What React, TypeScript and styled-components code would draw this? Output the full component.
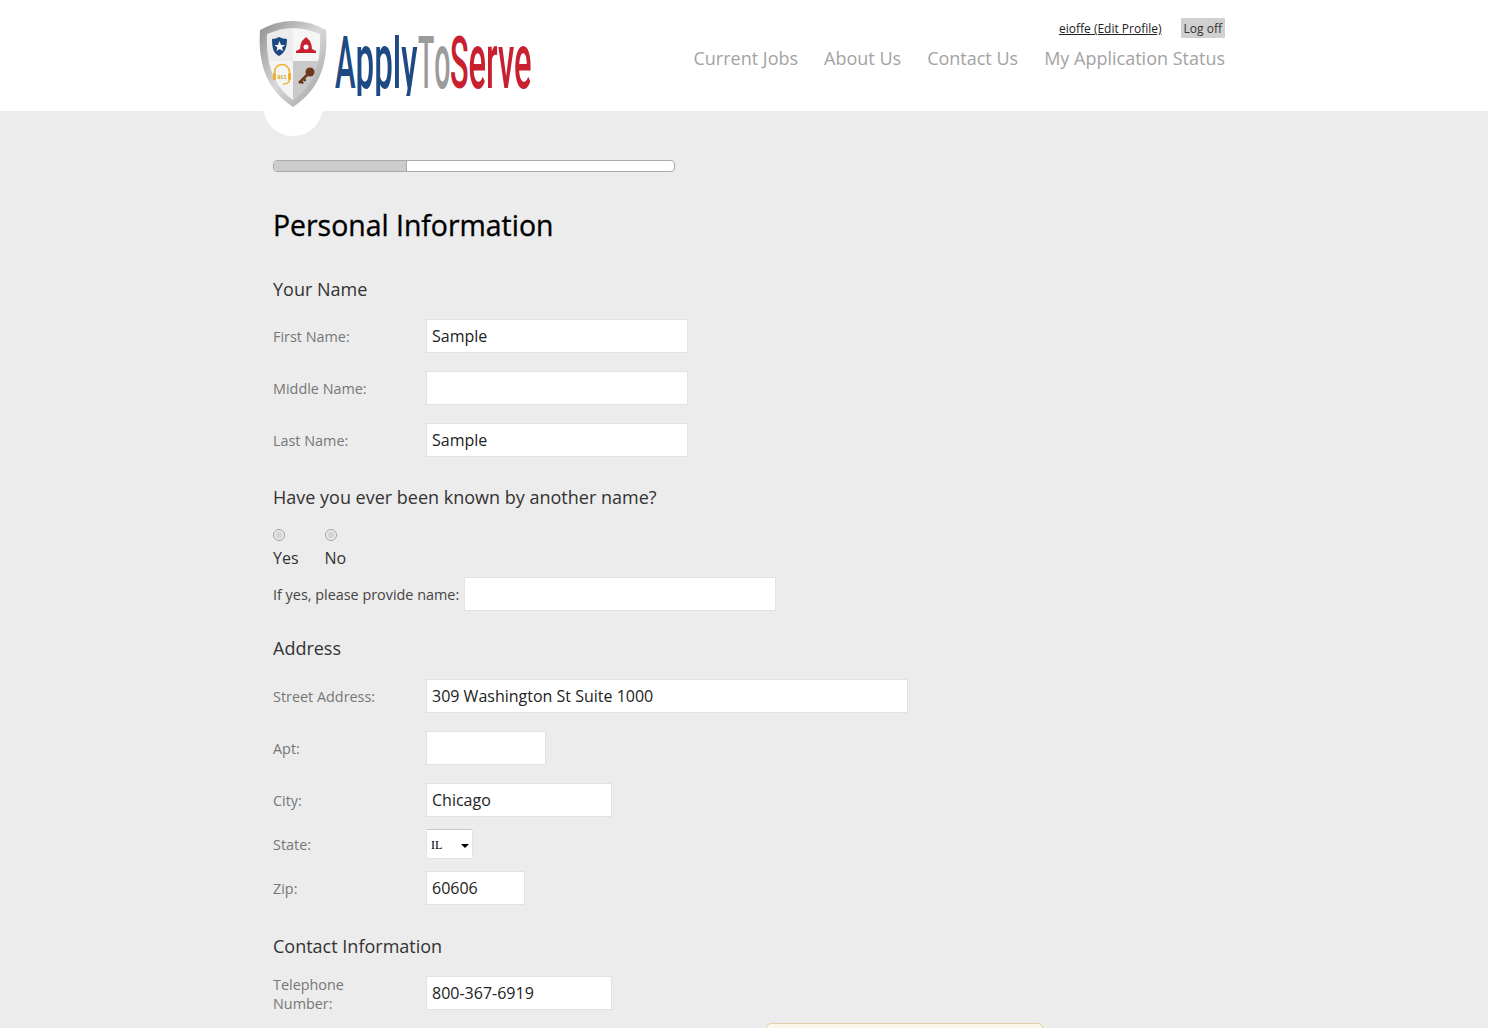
import React from "react";
import styled, { createGlobalStyle } from "styled-components";

const Global = createGlobalStyle`
  html, body { margin: 0; padding: 0; height: 1028px; overflow: hidden; background: #ececec; }
  body { font-family: "Open Sans", "Liberation Sans", sans-serif; color: #333; }
`;
const Header = styled.header`
  position: relative; height: 111px; background: #fff;
`;
const HeaderInner = styled.div`
  position: relative; width: 960px; height: 111px; margin: 0 auto; display: flex; justify-content: space-between;
`;
const LogoBump = styled.div`
  position: absolute; left: -1px; top: 76px; width: 60px; height: 60px; border-radius: 50%; background: #fff;
`;
const LogoArt = styled.svg`
  position: relative; display: block; margin: 20px 0 0 -5px; width: 274px; height: 88px;
`;
const HeaderRight = styled.div`
  display: flex; flex-direction: column; align-items: flex-end; padding-top: 18px; margin-right: -1px;
`;
const Utility = styled.div`
  display: flex; align-items: flex-start; gap: 19px; height: 20px; font-size: 12px; line-height: 22px;
`;
const ProfileLink = styled.a`
  color: #222; text-decoration: underline;
`;
const LogOff = styled.a`
  background: #d0d0d0; color: #333; padding: 0 3px; height: 20px;
`;
const Nav = styled.nav`
  display: flex; gap: 26px; margin-top: 7px; font-size: 18px; line-height: 26px; color: #a3a3a3;
`;
const Main = styled.main`
  width: 960px; margin: 0 auto; padding: 49px 0 0 9px; box-sizing: border-box;
`;
const Progress = styled.div`
  width: 402px; height: 12px; box-sizing: border-box; background: #fff; border: 1px solid #aaa; border-radius: 4px; overflow: hidden; margin-bottom: 34px;
`;
const ProgressFill = styled.div`
  height: 100%; background: #ccc; border-right: 1px solid #aaa;
`;
const Title = styled.h1`
  margin: 0 0 32px; font-size: 28.4px; line-height: 38px; font-weight: 400; color: #000; -webkit-text-stroke: .35px #000;
`;
const Section = styled.h2<{ $mb: number }>`
  margin: 0 0 ${p => p.$mb}px; font-size: 18px; line-height: 26px; font-weight: 400; color: #333;
`;
const Row = styled.div<{ $mb?: number }>`
  display: flex; align-items: center; margin-bottom: ${p => p.$mb ?? 18}px;
`;
const Label = styled.label`
  width: 153px; flex: none; font-size: 14.4px; line-height: 19px; color: #777;
`;
const TwoLineLabel = styled(Label)`
  padding-top: 2px;
`;
const TextInput = styled.input<{ $w: number }>`
  width: ${p => p.$w}px; height: 34px; box-sizing: border-box; padding: 0 5px; background: #fff;
  border: 1px solid #e2e2e2; font: 16px "Open Sans", sans-serif; color: #222; outline: none;
`;
const RadioGroup = styled.div`
  display: flex; gap: 26px; margin-bottom: 8px;
`;
const RadioOption = styled.label`
  display: flex; flex-direction: column; align-items: flex-start; gap: 6px; font-size: 16px; line-height: 22px; color: #333;
`;
const Radio = styled.input`
  appearance: none; margin: 0; width: 12px; height: 12px; border: 1px solid #a0a0a0; border-radius: 50%; box-sizing: border-box;
  background: radial-gradient(circle at 50% 50%, #d4d4d4 0 35%, #f4f4f4 70%);
`;
const InlineLabel = styled.label`
  font-size: 14.4px; line-height: 19px; color: #444; margin-right: 5px;
`;
const SelectWrap = styled.div`
  position: relative; width: 47px; height: 30px;
  &::after {
    content: ""; position: absolute; right: 4px; top: 15px; border: 4px solid transparent; border-top-color: #000; border-bottom: 0;
  }
`;
const StateSelect = styled.select`
  appearance: none; width: 47px; height: 30px; box-sizing: border-box; padding: 2px 0 0 4px; background: #fff;
  border: 1px solid #e2e2e2; border-top-color: #c8c8c8; border-radius: 2px; font: 12px "Liberation Serif", serif; color: #000; outline: none;
`;
const HelpPanel = styled.div`
  position: fixed; left: 766px; top: 1023px; width: 277px; height: 40px; box-sizing: border-box;
  background: #fdf6e6; border: 1px solid #e6cfa6; border-radius: 5px;
`;

const Logo = () => (
  <LogoArt viewBox="259 20 274 88">
    <defs>
      <linearGradient id="rim" x1="0" y1="0" x2="1" y2="1">
        <stop offset="0" stopColor="#8f8f8f" /><stop offset=".5" stopColor="#d8d8d8" /><stop offset="1" stopColor="#9a9a9a" />
      </linearGradient>
      <clipPath id="inner">
        <path d="M267 34 Q281 28 293 28 Q306 28 320 34 C321 60 316 84 293 100 C271 84 266 60 267 34Z" />
      </clipPath>
      <clipPath id="wordmark">
        <rect x="330" y="35" width="205" height="61" />
      </clipPath>
    </defs>
    <path d="M260 30 Q276 21 293 21 Q310 21 326 30 C328 60 322 88 293 107 C264 88 258 60 260 30Z" fill="url(#rim)" />
    <g clipPath="url(#inner)">
      <rect x="260" y="24" width="33" height="37" fill="#ececec" />
      <rect x="293" y="24" width="34" height="37" fill="#f6f6f6" />
      <rect x="260" y="61" width="33" height="42" fill="#f4f4f4" />
      <rect x="293" y="61" width="34" height="42" fill="#c9c9c9" />
    </g>
    <path d="M272 39 Q276 39 279 37 Q283 39 287 39 C287 47 285 53 279 56 C273 53 272 47 272 39Z" fill="#1d4a83" />
    <path d="M279.500 41 L281 45 L285 45 L282 47.500 L283 51 L279.500 49 L276.500 51 L277.500 47.500 L274.500 45 L278 45Z" fill="#fff" />
    <path d="M306 37 L310 41 Q312 45 312 49 L316 51 V53 H296 V51 L300 49 Q300 45 302 41Z" fill="#c8202f" />
    <circle cx="306" cy="47" r="2.500" fill="#fff" />
    <path d="M274.500 74 V72 A7.500 7.500 0 0 1 289.500 72 V74" fill="none" stroke="#eeb02c" strokeWidth="1.500" />
    <rect x="273" y="73" width="3" height="7" rx="1" fill="#eeb02c" />
    <rect x="288" y="73" width="3" height="7" rx="1" fill="#eeb02c" />
    <path d="M289.500 80 Q289 84 283 84" fill="none" stroke="#eeb02c" strokeWidth="1.500" />
    <text x="282" y="78.500" fontFamily="'Liberation Sans', sans-serif" fontSize="5.500" fontWeight="700" textAnchor="middle" fill="#d9a020">911</text>
    <circle cx="310" cy="72" r="4.500" fill="#6b3a1c" />
    <path d="M307 75 L299 83 M301 81 L303 83.500 M303.500 78.500 L305.500 81" stroke="#6b3a1c" strokeWidth="2.500" fill="none" />
    <g clipPath="url(#wordmark)" fontFamily="Roboto, 'Liberation Sans', sans-serif" fontWeight="500">
      <text transform="translate(335 88) scale(.425 1)" fill="#1d4a83"><tspan fontSize="73">A</tspan><tspan fontSize="78">pply</tspan></text>
      <text transform="translate(418 88) scale(.365 1)" fill="#9b9b9b"><tspan fontSize="73">T</tspan><tspan fontSize="78">o</tspan></text>
      <text transform="translate(450 88) scale(.42 1)" fill="#c8202f"><tspan fontSize="73">S</tspan><tspan fontSize="78">erve</tspan></text>
    </g>
  </LogoArt>
);

export default function App() {
  return (
    <>
      <Global />
      <Header>
        <HeaderInner>
          <LogoBump />
          <Logo />
          <HeaderRight>
            <Utility>
              <ProfileLink>eioffe (Edit Profile)</ProfileLink>
              <LogOff>Log off</LogOff>
            </Utility>
            <Nav>
              <span>Current Jobs</span>
              <span>About Us</span>
              <span>Contact Us</span>
              <span>My Application Status</span>
            </Nav>
          </HeaderRight>
        </HeaderInner>
      </Header>
      <Main>
        <Progress><ProgressFill style={{ width: `${(132 / 400) * 100}%` }} /></Progress>
        <Title>Personal Information</Title>
        <Section $mb={17}>Your Name</Section>
        <Row><Label>First Name:</Label><TextInput $w={262} defaultValue="Sample" /></Row>
        <Row><Label>Middle Name:</Label><TextInput $w={262} /></Row>
        <Row $mb={27}><Label>Last Name:</Label><TextInput $w={262} defaultValue="Sample" /></Row>
        <Section $mb={19}>Have you ever been known by another name?</Section>
        <RadioGroup>
          <RadioOption><Radio type="radio" name="alias" />Yes</RadioOption>
          <RadioOption><Radio type="radio" name="alias" />No</RadioOption>
        </RadioGroup>
        <Row $mb={24}><InlineLabel>If yes, please provide name:</InlineLabel><TextInput $w={312} /></Row>
        <Section $mb={18}>Address</Section>
        <Row><Label>Street Address:</Label><TextInput $w={482} defaultValue="309 Washington St Suite 1000" /></Row>
        <Row><Label>Apt:</Label><TextInput $w={120} /></Row>
        <Row $mb={12}><Label>City:</Label><TextInput $w={186} defaultValue="Chicago" /></Row>
        <Row $mb={12}>
          <Label>State:</Label>
          <SelectWrap><StateSelect defaultValue="IL"><option value="IL">IL</option></StateSelect></SelectWrap>
        </Row>
        <Row $mb={28}><Label>Zip:</Label><TextInput $w={99} defaultValue="60606" /></Row>
        <Section $mb={14}>Contact Information</Section>
        <Row><TwoLineLabel>Telephone<br />Number:</TwoLineLabel><TextInput $w={186} defaultValue="800-367-6919" /></Row>
      </Main>
      <HelpPanel />
    </>
  );
}
